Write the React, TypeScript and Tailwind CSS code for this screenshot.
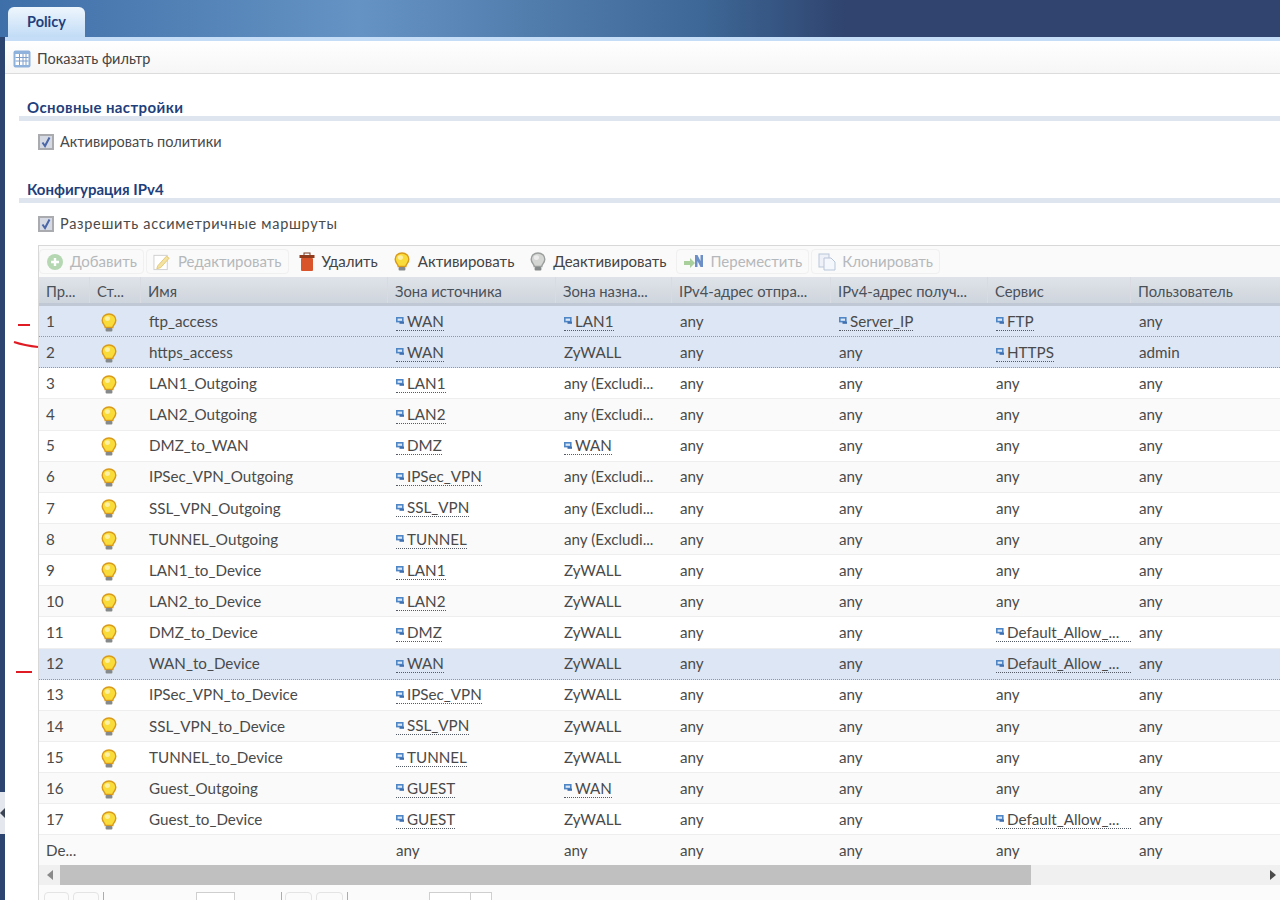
const font = "font-['Lato','Open_Sans',sans-serif]";

type Cell = string | { link: string };

const l = (link: string) => ({ link });

const rows: { id: string; name: string; cells: Cell[]; user?: string; hl?: boolean }[] = [
  { id: '1', name: 'ftp_access', cells: [l('WAN'), l('LAN1'), 'any', l('Server_IP'), l('FTP')], hl: true },
  { id: '2', name: 'https_access', cells: [l('WAN'), 'ZyWALL', 'any', 'any', l('HTTPS')], user: 'admin', hl: true },
  { id: '3', name: 'LAN1_Outgoing', cells: [l('LAN1'), 'any (Excludi...', 'any', 'any', 'any'] },
  { id: '4', name: 'LAN2_Outgoing', cells: [l('LAN2'), 'any (Excludi...', 'any', 'any', 'any'] },
  { id: '5', name: 'DMZ_to_WAN', cells: [l('DMZ'), l('WAN'), 'any', 'any', 'any'] },
  { id: '6', name: 'IPSec_VPN_Outgoing', cells: [l('IPSec_VPN'), 'any (Excludi...', 'any', 'any', 'any'] },
  { id: '7', name: 'SSL_VPN_Outgoing', cells: [l('SSL_VPN'), 'any (Excludi...', 'any', 'any', 'any'] },
  { id: '8', name: 'TUNNEL_Outgoing', cells: [l('TUNNEL'), 'any (Excludi...', 'any', 'any', 'any'] },
  { id: '9', name: 'LAN1_to_Device', cells: [l('LAN1'), 'ZyWALL', 'any', 'any', 'any'] },
  { id: '10', name: 'LAN2_to_Device', cells: [l('LAN2'), 'ZyWALL', 'any', 'any', 'any'] },
  { id: '11', name: 'DMZ_to_Device', cells: [l('DMZ'), 'ZyWALL', 'any', 'any', l('Default_Allow_...')] },
  { id: '12', name: 'WAN_to_Device', cells: [l('WAN'), 'ZyWALL', 'any', 'any', l('Default_Allow_...')], hl: true },
  { id: '13', name: 'IPSec_VPN_to_Device', cells: [l('IPSec_VPN'), 'ZyWALL', 'any', 'any', 'any'] },
  { id: '14', name: 'SSL_VPN_to_Device', cells: [l('SSL_VPN'), 'ZyWALL', 'any', 'any', 'any'] },
  { id: '15', name: 'TUNNEL_to_Device', cells: [l('TUNNEL'), 'ZyWALL', 'any', 'any', 'any'] },
  { id: '16', name: 'Guest_Outgoing', cells: [l('GUEST'), l('WAN'), 'any', 'any', 'any'] },
  { id: '17', name: 'Guest_to_Device', cells: [l('GUEST'), 'ZyWALL', 'any', 'any', l('Default_Allow_...')] },
];

const columns = 'grid grid-cols-[51px_51px_247px_168px_116px_159px_157px_143px_150px]';
const headers = ['Пр...', 'Ст...', 'Имя', 'Зона источника', 'Зона назна...', 'IPv4-адрес отпра...', 'IPv4-адрес получ...', 'Сервис', 'Пользователь'];

function Bulb({ off }: { off?: boolean }) {
  const body = off ? '#d4d6d4' : '#f9dc3a';
  const edge = off ? '#9a9e9c' : '#d99a1c';
  return (
    <svg width="16" height="20" viewBox="0 0 16 20" className="shrink-0">
      <path d="M8 1C4 1 1.2 3.7 1.2 7.2c0 2.6 1.6 4 2.5 5.6.4.7.5 1.2.5 1.7h7.6c0-.5.1-1 .5-1.7.9-1.6 2.5-3 2.5-5.6C14.8 3.7 12 1 8 1z" fill={body} stroke={edge} strokeWidth="1.4" />
      <ellipse cx="6.4" cy="5.6" rx="2.6" ry="2.4" fill="#ffffff" opacity="0.55" />
      <rect x="4.6" y="15" width="6.8" height="3.4" rx="1" fill="#85898a" />
    </svg>
  );
}

function ZoneIcon() {
  return (
    <svg width="8" height="7" viewBox="0 0 8 7" className="shrink-0">
      <rect x="0.8" y="0.8" width="6" height="3.8" fill="#dce8f6" stroke="#4f86c6" strokeWidth="1.6" />
      <rect x="3.5" y="4.6" width="4.5" height="2.2" fill="#3f6fae" />
    </svg>
  );
}

function Check() {
  return (
    <span className="flex h-4 w-4 items-center justify-center border-2 border-[#a9abae] bg-[#d5d9e4]">
      <svg width="12" height="12" viewBox="0 0 12 12">
        <path d="M2.5 6.5 5 10l4.5-8.5" fill="none" stroke="#4a66a8" strokeWidth="2" />
      </svg>
    </span>
  );
}

function ToolButton({ icon, label, disabled }: { icon: React.ReactNode; label: string; disabled?: boolean }) {
  return (
    <div className={`flex h-[25px] items-center gap-[6px] rounded-sm px-[6px] ${disabled ? 'border border-[#f0f0f0] text-[#b5b8ba]' : 'border border-transparent text-[#444444]'}`}>
      {icon}
      <span className="whitespace-nowrap">{label}</span>
    </div>
  );
}

function CellView({ cell }: { cell: Cell }) {
  if (typeof cell === 'string') return <div className="truncate pl-2">{cell}</div>;
  const long = cell.link.startsWith('Default');
  return (
    <div className="flex pl-2">
      <span className={`inline-flex items-center gap-[3px] border-b border-dotted border-[#555b66] leading-[18px] ${long ? 'w-[135px]' : ''}`}>
        <ZoneIcon />
        {cell.link}
      </span>
    </div>
  );
}

function SectionTitle({ children, className }: { children: string; className?: string }) {
  return (
    <div className={`ml-[14px] border-b-[5px] border-[#dfe5ef] pl-2 text-[15px] leading-[17px] font-bold text-[#1f3f7c] ${className ?? ''}`}>
      {children}
    </div>
  );
}

export default function App() {
  return (
    <div className={`relative flex h-[900px] w-[1280px] flex-col overflow-hidden bg-[#2c4570] text-[14.5px] text-[#4a4a4a] ${font}`}>
      <div className="flex h-[37px] shrink-0 items-end bg-[linear-gradient(90deg,#3f6fa8_0%,#6593c4_28%,#3d6796_55%,#30446f_66%)] pl-2">
        <div className="flex h-[30px] w-[77px] items-center justify-center rounded-t-md bg-gradient-to-b from-[#eef6fd] to-[#c2dcf6] text-[14.5px] font-bold text-[#1f3f7c]">
          Policy
        </div>
      </div>
      <div className="ml-[5px] flex min-h-0 flex-1 flex-col border-t-4 border-[#c5ddf6] bg-white">
        <div className="flex h-[33px] shrink-0 items-center gap-[6px] border-b border-[#dcdcdc] bg-gradient-to-b from-white to-[#f6f6f6] pt-[3px] pl-2 text-[#444444]">
          <svg width="18" height="18" viewBox="0 0 18 18">
            <rect x="0.5" y="0.5" width="17" height="17" rx="2" fill="#8fb2dc" />
            <rect x="2.5" y="4" width="13" height="11" fill="#ffffff" />
            <path d="M2.5 7.5h13M2.5 11h13M6.5 4v11M10 4v11M13 4v11" stroke="#7f9fcb" strokeWidth="1" />
          </svg>
          Показать фильтр
        </div>

        <div className="mt-[25px]">
          <SectionTitle className="tracking-[0.4px]">Основные настройки</SectionTitle>
        </div>
        <div className="mt-[11px] ml-[33px] flex h-[20px] items-center gap-[6px]">
          <Check />
          Активировать политики
        </div>
        <div className="mt-[29px]">
          <SectionTitle>Конфигурация IPv4</SectionTitle>
        </div>
        <div className="mt-[11px] ml-[33px] flex h-[20px] items-center gap-[6px]">
          <Check />
          <span className="tracking-[0.7px]">Разрешить ассиметричные маршруты</span>
        </div>

        <div className="mt-[11px] ml-[33px] flex flex-col border-t border-l border-[#d8d8d8] text-[15.2px]">
          <div className="flex h-[31px] items-center gap-[2px] bg-[#fafafa] text-[15px]">
            <ToolButton
              disabled
              label="Добавить"
              icon={
                <svg width="18" height="18" viewBox="0 0 18 18">
                  <circle cx="9" cy="9" r="8" fill="#b5d8b3" />
                  <path d="M9 5v8M5 9h8" stroke="#ffffff" strokeWidth="2.4" />
                </svg>
              }
            />
            <ToolButton
              disabled
              label="Редактировать"
              icon={
                <svg width="19" height="18" viewBox="0 0 20 18">
                  <rect x="1" y="2" width="14" height="15" fill="#ffffff" stroke="#cfcfcf" />
                  <path d="M5 13 14 3l3 2-9 10-4 1z" fill="#f3e3a0" stroke="#e4c877" />
                </svg>
              }
            />
            <ToolButton
              label="Удалить"
              icon={
                <svg width="18" height="20" viewBox="0 0 18 20">
                  <rect x="6" y="1" width="6" height="3" fill="none" stroke="#7a3a20" />
                  <rect x="1.5" y="3" width="15" height="3" fill="#8f3a1a" />
                  <rect x="3" y="6" width="12" height="13" rx="1" fill="#d9532b" />
                </svg>
              }
            />
            <ToolButton label="Активировать" icon={<span className="mr-[2px] flex"><Bulb /></span>} />
            <ToolButton label="Деактивировать" icon={<span className="mr-[1px] flex"><Bulb off /></span>} />
            <ToolButton
              disabled
              label="Переместить"
              icon={
                <svg width="22" height="16" viewBox="0 0 22 16">
                  <path d="M1 7h6V4l5 5-5 5v-3H1z" fill="#a9cf9c" />
                  <path d="M12 1h2.5l3 6V1H20v12h-2.5l-3-6v6H12z" fill="#6d8fc7" />
                </svg>
              }
            />
            <ToolButton
              disabled
              label="Клонировать"
              icon={
                <svg width="18" height="18" viewBox="0 0 18 18">
                  <rect x="1" y="1" width="10" height="13" fill="#eef2f8" stroke="#b9c5d8" />
                  <path d="M6 5h7l4 4v8H6z" fill="#f4f7fb" stroke="#b9c5d8" />
                </svg>
              }
            />
          </div>

          <div className={`${columns} h-[29px] items-center border-b-[3px] border-[#bfc8d4] bg-gradient-to-b from-[#dfe3e9] to-[#cfd5dd] text-[14.8px] text-[#4a5058]`}>
            {headers.map(h => (
              <div key={h} className="flex h-full items-center truncate border-r border-[#d8dce2] pt-[2px] pl-[7px]">
                {h}
              </div>
            ))}
          </div>

          {rows.map((r, i) => (
            <div
              key={r.id}
              className={`${columns} h-[31.15px] items-center ${
                r.hl ? 'border-b border-dotted border-[#8d97a8] bg-[#dde6f4]' : `border-b border-[#eeeeee] ${i % 2 ? 'bg-[#fafafa]' : 'bg-white'}`
              }`}
            >
              <div className="pl-[7px]">{r.id}</div>
              <div className="flex pt-[3px] pl-[11px]">
                <Bulb />
              </div>
              <div className="truncate pl-2">{r.name}</div>
              {r.cells.map((c, j) => (
                <CellView key={j} cell={c} />
              ))}
              <div className="pl-2">{r.user ?? 'any'}</div>
            </div>
          ))}

          <div className={`${columns} h-[30px] items-center bg-[#fafafa]`}>
            <div className="pl-[7px]">De...</div>
            <div />
            <div />
            {['any', 'any', 'any', 'any', 'any', 'any'].map((a, i) => (
              <div key={i} className="pl-2">{a}</div>
            ))}
          </div>

          <div className="flex h-[20px] items-center bg-[#f0f0f0]">
            <div className="flex w-[21px] justify-center">
              <svg width="6" height="10" viewBox="0 0 6 10"><path d="M6 0v10L0 5z" fill="#8a8a8a" /></svg>
            </div>
            <div className="h-full w-[971px] bg-[#c0c0c0]" />
            <div className="flex flex-1 justify-end pr-[4px]">
              <svg width="6" height="10" viewBox="0 0 6 10"><path d="M0 0v10l6-5z" fill="#4a4a4a" /></svg>
            </div>
          </div>

          <div className="flex h-[20px] items-start bg-[#fbfbfb] pt-[7px] pl-[5px]">
            <div className="h-[14px] w-[25px] rounded-sm border border-[#e4e4e4]" />
            <div className="ml-[4px] h-[14px] w-[26px] rounded-sm border border-[#e4e4e4]" />
            <div className="ml-[4px] h-[14px] w-px bg-[#8fb2dc]" />
            <div className="ml-[92px] h-[14px] w-[39px] border border-[#cfcfcf] bg-white" />
            <div className="ml-[46px] h-[14px] w-px bg-[#8fb2dc]" />
            <div className="ml-[3px] h-[14px] w-[27px] rounded-sm border border-[#e4e4e4]" />
            <div className="ml-[4px] h-[14px] w-[27px] rounded-sm border border-[#e4e4e4]" />
            <div className="ml-[4px] h-[14px] w-px bg-[#8fb2dc]" />
            <div className="ml-[81px] flex h-[14px] w-[63px] justify-end border border-[#cfcfcf] bg-white">
              <div className="w-[21px] border-l border-[#cfcfcf]" />
            </div>
          </div>
        </div>
      </div>

      {/* red pen marks over the screenshot */}
      <svg className="absolute top-[318px] left-[12px]" width="28" height="34" viewBox="0 0 28 34">
        <path d="M6 7h12" stroke="#e01b24" strokeWidth="2" fill="none" />
        <path d="M2 24c6 2 15 4 24 5" stroke="#e01b24" strokeWidth="2" fill="none" />
      </svg>
      <svg className="absolute top-[669px] left-[15px]" width="18" height="6" viewBox="0 0 18 6">
        <path d="M1 3h16" stroke="#e01b24" strokeWidth="2" />
      </svg>
      {/* collapse handle on the left edge */}
      <svg className="absolute top-[790px] left-0" width="6" height="46" viewBox="0 0 6 46">
        <path d="M0 2h5v42H0z" fill="#e4e8ee" />
        <path d="M0 23l5-5v10z" fill="#3b4454" />
      </svg>
    </div>
  );
}
